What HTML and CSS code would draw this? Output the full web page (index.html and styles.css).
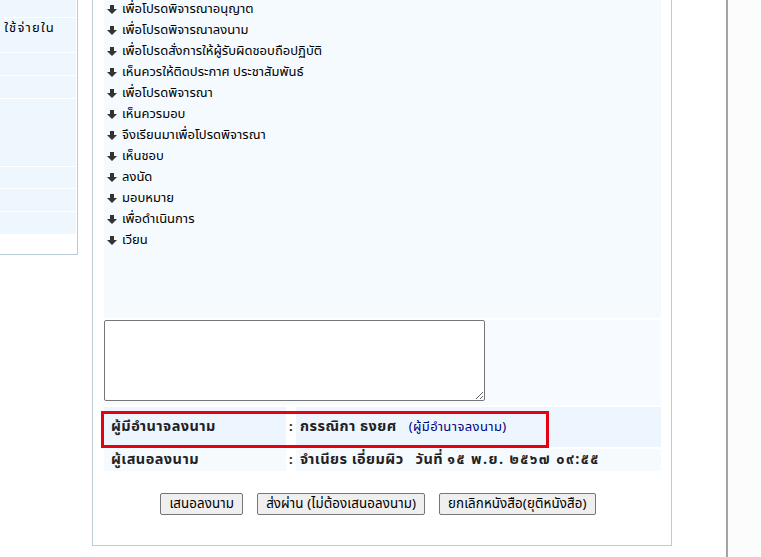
FILE: index.html
```html
<!DOCTYPE html>
<html lang="th">
<head>
<meta charset="utf-8">
<title>เสนอลงนาม</title>
<link rel="stylesheet" href="styles.css">
</head>
<body>
<div class="page">
  <div class="left">
    <div class="lrow r-a"></div>
    <div class="lrow r-b"><span class="ltext">ใช้จ่ายใน</span></div>
    <div class="lrow r-c"></div>
    <div class="lrow r-d"></div>
    <div class="lrow r-e"></div>
    <div class="lrow r-f"></div>
    <div class="lrow r-g"></div>
    <div class="lrow r-h"></div>
  </div>

  <div class="main">
    <div class="list">
      <div class="item"><svg class="arrow" viewBox="0 0 10 9"><polygon points="3,0 7,0 7,4 10,4 5,9 0,4 3,4"/></svg>เพื่อโปรดพิจารณาอนุญาต</div>
      <div class="item"><svg class="arrow" viewBox="0 0 10 9"><polygon points="3,0 7,0 7,4 10,4 5,9 0,4 3,4"/></svg>เพื่อโปรดพิจารณาลงนาม</div>
      <div class="item"><svg class="arrow" viewBox="0 0 10 9"><polygon points="3,0 7,0 7,4 10,4 5,9 0,4 3,4"/></svg>เพื่อโปรดสั่งการให้ผู้รับผิดชอบถือปฏิบัติ</div>
      <div class="item"><svg class="arrow" viewBox="0 0 10 9"><polygon points="3,0 7,0 7,4 10,4 5,9 0,4 3,4"/></svg>เห็นควรให้ติดประกาศ ประชาสัมพันธ์</div>
      <div class="item"><svg class="arrow" viewBox="0 0 10 9"><polygon points="3,0 7,0 7,4 10,4 5,9 0,4 3,4"/></svg>เพื่อโปรดพิจารณา</div>
      <div class="item"><svg class="arrow" viewBox="0 0 10 9"><polygon points="3,0 7,0 7,4 10,4 5,9 0,4 3,4"/></svg>เห็นควรมอบ</div>
      <div class="item"><svg class="arrow" viewBox="0 0 10 9"><polygon points="3,0 7,0 7,4 10,4 5,9 0,4 3,4"/></svg>จึงเรียนมาเพื่อโปรดพิจารณา</div>
      <div class="item"><svg class="arrow" viewBox="0 0 10 9"><polygon points="3,0 7,0 7,4 10,4 5,9 0,4 3,4"/></svg>เห็นชอบ</div>
      <div class="item"><svg class="arrow" viewBox="0 0 10 9"><polygon points="3,0 7,0 7,4 10,4 5,9 0,4 3,4"/></svg>ลงนัด</div>
      <div class="item"><svg class="arrow" viewBox="0 0 10 9"><polygon points="3,0 7,0 7,4 10,4 5,9 0,4 3,4"/></svg>มอบหมาย</div>
      <div class="item"><svg class="arrow" viewBox="0 0 10 9"><polygon points="3,0 7,0 7,4 10,4 5,9 0,4 3,4"/></svg>เพื่อดำเนินการ</div>
      <div class="item"><svg class="arrow" viewBox="0 0 10 9"><polygon points="3,0 7,0 7,4 10,4 5,9 0,4 3,4"/></svg>เวียน</div>
    </div>

    <div class="comment"><textarea class="note"></textarea></div>

    <div class="sign-row primary">
      <div class="lbl">ผู้มีอำนาจลงนาม</div>
      <div class="colon">:</div>
      <div class="val">กรรณิกา ธงยศ<span class="role">(ผู้มีอำนาจลงนาม)</span></div>
      <div class="highlight"></div>
    </div>

    <div class="sign-row secondary">
      <div class="lbl">ผู้เสนอลงนาม</div>
      <div class="colon">:</div>
      <div class="val">จำเนียร เอี่ยมผิว<span class="date">วันที่ <span class="digits">๑๕ พ.ย. ๒๕๖๗ ๐๙:๕๕</span></span></div>
    </div>

    <div class="actions">
      <button class="btn">เสนอลงนาม</button>
      <button class="btn">ส่งผ่าน (ไม่ต้องเสนอลงนาม)</button>
      <button class="btn">ยกเลิกหนังสือ(ยุติหนังสือ)</button>
    </div>
  </div>

  <div class="gutter"></div>
  <div class="edge"></div>
</div>
</body>
</html>
```

FILE: styles.css
```css
html, body {
  margin: 0;
  padding: 0;
  background: #ffffff;
  overflow: hidden;
}

body {
  font-family: Tahoma, "Noto Sans Thai", "Noto Sans", "DejaVu Sans", sans-serif;
  font-size: 13px;
  color: #000;
}

.page {
  display: flex;
  align-items: flex-start;
  margin-top: -20px;
  min-height: calc(100vh + 20px);
}

/* left panel (partially visible) */
.left {
  width: 78px;
  height: 275px;
  box-sizing: border-box;
  border-right: 1px solid #b9cdd4;
  border-bottom: 1px solid #b9cdd4;
  padding-right: 1px;
  display: flex;
  flex-direction: column;
  gap: 1px;
  flex-shrink: 0;
}

.lrow {
  background: #eef7fd;
  display: flex;
  justify-content: flex-end;
  overflow: hidden;
}

.r-a { height: 37px; }
.r-b { height: 34px; align-items: flex-start; }
.r-c { height: 22px; }
.r-d { height: 22px; }
.r-e { height: 67px; }
.r-f { height: 21px; }
.r-g { height: 22px; }
.r-h { height: 22px; }

.ltext {
  white-space: nowrap;
  padding-right: 21px;
  line-height: 21px;
  letter-spacing: 1.2px;
}

/* main panel */
.main {
  margin-left: 14px;
  width: 580px;
  box-sizing: border-box;
  border: 1px solid #b9cdd4;
  padding: 0 10px 30px 11px;
  display: flex;
  flex-direction: column;
  gap: 2px;
  flex-shrink: 0;
}

.list {
  background: #f5faff;
  padding: 18px 0 67px 0;
}

.item {
  display: flex;
  align-items: center;
  height: 21px;
  line-height: 21px;
  white-space: nowrap;
}

.arrow {
  width: 10px;
  height: 9px;
  margin-left: 3px;
  margin-right: 5px;
  fill: #333;
  flex-shrink: 0;
}

.comment {
  background: #f7fbff;
  height: 85px;
}

.note {
  display: block;
  margin: 0;
  width: 381px;
  height: 81px;
  box-sizing: border-box;
  border: 1px solid #767676;
  border-radius: 2px;
  background: #fff;
  font-family: inherit;
  font-size: 13px;
}

.sign-row {
  position: relative;
  display: grid;
  grid-template-columns: 182px 10px 1fr;
  font-weight: bold;
  color: #222;
}

.sign-row.primary { height: 40px; }
.sign-row.secondary { height: 22px; }

.sign-row .lbl,
.sign-row .val {
  display: flex;
  align-items: center;
  white-space: nowrap;
  font-size: 14.5px;
  letter-spacing: 0.45px;
}

.sign-row .lbl { padding-left: 7px; }

.sign-row .colon {
  display: flex;
  align-items: center;
  padding-left: 3px;
}

.sign-row .val { padding-left: 4px; }

.primary .lbl,
.primary .val { background: #edf5fe; }

.secondary .lbl,
.secondary .val { background: #f5fafe; }

.role {
  font-weight: normal;
  font-size: 13px;
  letter-spacing: 0.4px;
  color: #000080;
  margin-left: 12px;
}

.date {
  margin-left: 12px;
  white-space: pre;
}

.digits { letter-spacing: 1.4px; }

.highlight {
  position: absolute;
  left: -3px;
  top: 4px;
  width: 448px;
  height: 37px;
  box-sizing: border-box;
  border: 3px solid #e60012;
  pointer-events: none;
}

.actions {
  margin-top: 20px;
  padding-right: 9px;
  display: flex;
  justify-content: center;
  gap: 14px;
}

.btn {
  height: 22px;
  padding: 0 8px;
  font-family: inherit;
  font-size: 13.33px;
  letter-spacing: 0.1px;
  color: #000;
  background: #efefef;
  border: 1px solid #767676;
  border-radius: 2px;
}

/* right side */
.gutter {
  width: 54px;
  flex-shrink: 0;
}

.edge {
  flex: 1;
  align-self: stretch;
  border-left: 2px solid #a3a3a3;
  background: #fcfcfc;
}
```
